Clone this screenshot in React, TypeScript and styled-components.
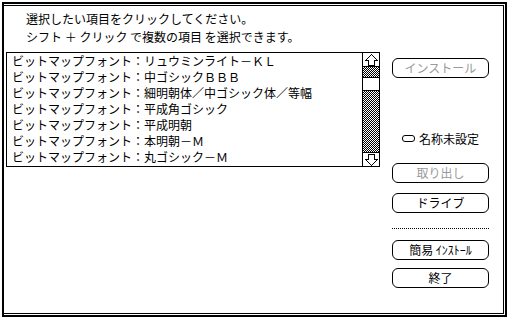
import React from "react";
import styled, { createGlobalStyle } from "styled-components";

const GlobalStyle = createGlobalStyle`
  html, body {
    margin: 0;
    padding: 0;
    background: #fff;
  }
  body {
    font-family: "Noto Sans CJK JP", "Noto Sans", sans-serif;
    font-size: 12px;
    color: #000;
  }
`;

const dither = `repeating-conic-gradient(#000 0 25%, #fff 0 50%) 0 0 / 2px 2px`;

const Screen = styled.div`
  width: 510px;
  height: 322px;
  overflow: hidden;
  padding: 2px 0 0 2px;
  box-sizing: border-box;
`;

const Dialog = styled.div`
  position: relative;
  width: 505px;
  height: 315px;
  box-sizing: border-box;
  border: 2px solid #000;
  outline: 1px solid #fff;
  background: #fff;
  padding: 1px 1px 1px 0;

  &::after {
    content: "";
    position: absolute;
    left: 4px;
    top: 4px;
    right: -5px;
    bottom: -5px;
    background: ${dither};
    z-index: -1;
  }
`;

const Inner = styled.div`
  height: 100%;
  box-sizing: border-box;
  border-top: 1px solid #000;
  border-right: 1px solid #000;
  border-bottom: 1px solid #000;
  display: flex;
  flex-direction: column;
`;

const Prompt = styled.div`
  padding: 4px 0 0 22px;
  line-height: 18px;
  white-space: pre;
`;

const Body = styled.div`
  display: flex;
  align-items: flex-start;
  gap: 12px;
  padding: 6px 0 0 2px;
`;

const ListBox = styled.div`
  width: 374px;
  height: 115px;
  box-sizing: border-box;
  border: 1px solid #000;
  display: flex;
`;

const Items = styled.div`
  flex: 1;
  min-width: 0;
  overflow: hidden;
`;

const Item = styled.div`
  height: 16px;
  line-height: 16px;
  padding-left: 5px;
  white-space: nowrap;
`;

const ScrollBar = styled.div`
  width: 16px;
  flex: none;
  border-left: 1px solid #000;
  display: grid;
  grid-template-rows: 14px 10px 14px 1fr 14px;
`;

const ArrowBox = styled.div<{ $down?: boolean }>`
  display: flex;
  align-items: center;
  justify-content: center;
  background: #fff;
  border-bottom: ${(p) => (p.$down ? "none" : "1px solid #000")};
  border-top: ${(p) => (p.$down ? "1px solid #000" : "none")};
`;

const Track = styled.div`
  background: ${dither};
`;

const Thumb = styled.div`
  background: #fff;
  border-top: 1px solid #000;
  border-bottom: 1px solid #000;
`;

const Side = styled.div`
  width: 97px;
  display: flex;
  flex-direction: column;
  padding-top: 6px;
`;

const Button = styled.div<{ $disabled?: boolean; $top?: number }>`
  height: 20px;
  box-sizing: border-box;
  border: 1px solid #000;
  border-radius: 6px;
  display: flex;
  align-items: center;
  justify-content: center;
  margin-top: ${(p) => p.$top ?? 0}px;
  color: ${(p) => (p.$disabled ? "#9a9a9a" : "#000")};
  line-height: 18px;
  white-space: pre;
`;

const DiskLabel = styled.div<{ $top: number }>`
  margin-top: ${(p) => p.$top}px;
  height: 16px;
  display: flex;
  align-items: center;
  padding-left: 10px;
  gap: 4px;
`;

const DiskIcon = styled.span`
  width: 11px;
  height: 5px;
  border: 1px solid #000;
  border-radius: 3px;
`;

const Divider = styled.div<{ $top: number }>`
  margin-top: ${(p) => p.$top}px;
  border-top: 1px dotted #000;
`;

const Arrow = ({ down }: { down?: boolean }) => (
  <svg
    width="13"
    height="12"
    viewBox="0 0 13 12"
    shapeRendering="crispEdges"
    style={{ transform: down ? "scaleY(-1)" : undefined }}
  >
    <polygon
      points="6.5,0.5 12.5,6.5 9.5,6.5 9.5,11.5 3.5,11.5 3.5,6.5 0.5,6.5"
      fill="#fff"
      stroke="#000"
      strokeWidth="1"
    />
  </svg>
);

const fonts = [
  "ビットマップフォント：リュウミンライト－ＫＬ",
  "ビットマップフォント：中ゴシックＢＢＢ",
  "ビットマップフォント：細明朝体／中ゴシック体／等幅",
  "ビットマップフォント：平成角ゴシック",
  "ビットマップフォント：平成明朝",
  "ビットマップフォント：本明朝－Ｍ",
  "ビットマップフォント：丸ゴシック－Ｍ",
];

export default function App() {
  return (
    <Screen>
      <GlobalStyle />
      <Dialog>
        <Inner>
          <Prompt>
            {"選択したい項目をクリックしてください。\nシフト ＋ クリック で複数の項目 を選択できます。"}
          </Prompt>
          <Body>
            <ListBox>
              <Items>
                {fonts.map((f) => (
                  <Item key={f}>{f}</Item>
                ))}
              </Items>
              <ScrollBar>
                <ArrowBox>
                  <Arrow />
                </ArrowBox>
                <Track />
                <Thumb />
                <Track />
                <ArrowBox $down>
                  <Arrow down />
                </ArrowBox>
              </ScrollBar>
            </ListBox>
            <Side>
              <Button $disabled>インストール</Button>
              <DiskLabel $top={52}>
                <DiskIcon />
                名称未設定
              </DiskLabel>
              <Button $disabled $top={17}>
                取り出し
              </Button>
              <Button $top={10}>ドライブ</Button>
              <Divider $top={15} />
              <Button $top={11}>簡易 ｲﾝｽﾄｰﾙ</Button>
              <Button $top={8}>終了</Button>
            </Side>
          </Body>
        </Inner>
      </Dialog>
    </Screen>
  );
}
